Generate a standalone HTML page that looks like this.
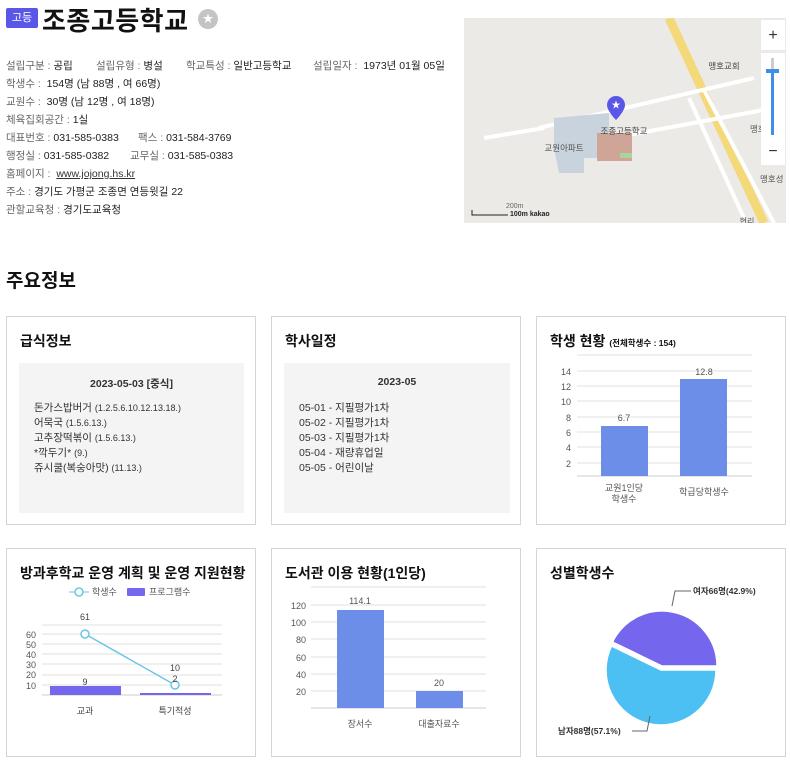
<!DOCTYPE html>
<html><head><meta charset="utf-8"><style>
*{margin:0;padding:0;box-sizing:border-box}
body{width:790px;height:760px;background:#fff;font-family:"Liberation Sans","Noto Sans CJK KR",sans-serif;color:#222;position:relative;overflow:hidden}
.a{position:absolute;white-space:nowrap}
.info{font-size:10.5px;color:#222}
.info .l{color:#666}
.card{position:absolute;border:1px solid #d4d4d4;background:#fff}
.card h3{position:absolute;left:13px;top:14px;font-size:14px;font-weight:bold;color:#111}
.gbox{position:absolute;background:#f4f4f4}
svg text{font-family:"Liberation Sans","Noto Sans CJK KR",sans-serif}
</style></head><body>
<div class="a" style="left:6px;top:8px;width:32px;height:20px;background:#5a57e8;border-radius:2px;color:#fff;font-size:11px;text-align:center;line-height:20px">고등</div>
<div class="a" style="left:42px;top:1px;font-size:26px;font-weight:bold;color:#111;letter-spacing:0.5px">조종고등학교</div>
<div class="a" style="left:198px;top:9px;width:20px;height:20px;border-radius:50%;background:#c4c4c4;color:#fff;font-size:11px;text-align:center;line-height:20px">★</div>

<div class="a info" style="left:6px;top:58px"><span class="l">설립구분 : </span>공립</div>
<div class="a info" style="left:96px;top:58px"><span class="l">설립유형 : </span>병설</div>
<div class="a info" style="left:186px;top:58px"><span class="l">학교특성 : </span>일반고등학교</div>
<div class="a info" style="left:313px;top:58px"><span class="l">설립일자 : </span>&nbsp;1973년 01월 05일</div>
<div class="a info" style="left:6px;top:76px"><span class="l">학생수 : </span>&nbsp;154명 (남 88명 , 여 66명)</div>
<div class="a info" style="left:6px;top:94px"><span class="l">교원수 : </span>&nbsp;30명 (남 12명 , 여 18명)</div>
<div class="a info" style="left:6px;top:112px"><span class="l">체육집회공간 : </span>1실</div>
<div class="a info" style="left:6px;top:130px"><span class="l">대표번호 : </span>031-585-0383</div>
<div class="a info" style="left:138px;top:130px"><span class="l">팩스 : </span>031-584-3769</div>
<div class="a info" style="left:6px;top:148px"><span class="l">행정실 : </span>031-585-0382</div>
<div class="a info" style="left:130px;top:148px"><span class="l">교무실 : </span>031-585-0383</div>
<div class="a info" style="left:6px;top:166px"><span class="l">홈페이지 : </span>&nbsp;<span style="text-decoration:underline;color:#333">www.jojong.hs.kr</span></div>
<div class="a info" style="left:6px;top:184px"><span class="l">주소 : </span>경기도 가평군 조종면 연등윗길 22</div>
<div class="a info" style="left:6px;top:202px"><span class="l">관할교육청 : </span>경기도교육청</div>

<svg class="a" style="left:464px;top:18px" width="322" height="205" viewBox="0 0 322 205">
<rect width="322" height="205" fill="#eceae6"/>
<path d="M205 0 L300 205" stroke="#f3d97a" stroke-width="9"/>
<path d="M75 110 L290 60 M95 130 L310 90 M240 72 L310 205 M225 80 L280 200 M20 120 L80 110" stroke="#fff" stroke-width="4" fill="none"/>
<path d="M90 100 L145 95 L145 140 L120 140 L120 155 L95 155 L90 130 Z" fill="#c9d3de"/>
<rect x="133" y="115" width="35" height="28" fill="#cfa597"/>
<rect x="156" y="135" width="12" height="5" fill="#a8d59a"/>
<path d="M152 78 a9 9 0 0 1 9 9 c0 6 -9 15 -9 15 c0 0 -9 -9 -9 -15 a9 9 0 0 1 9 -9z" fill="#5a57e8"/>
<text x="152" y="90" font-size="9" fill="#fff" text-anchor="middle">★</text>
<text x="160" y="116" font-size="8.5" fill="#444" text-anchor="middle">조종고등학교</text>
<text x="100" y="133" font-size="8.5" fill="#555" text-anchor="middle">교원아파트</text>
<text x="260" y="51" font-size="8.5" fill="#444" text-anchor="middle">맹호교회</text>
<text x="286" y="114" font-size="8.5" fill="#555">맹호아</text>
<text x="296" y="164" font-size="8.5" fill="#555">맹호성</text>
<text x="283" y="206" font-size="8" fill="#555" text-anchor="middle">현리</text>
<text x="42" y="190" font-size="7" fill="#666">200m</text>
<path d="M8 192 v5 h36" stroke="#222" fill="none"/>
<text x="46" y="198" font-size="7" font-weight="bold" fill="#222">100m  kakao</text>
<rect x="297" y="2" width="24" height="30" fill="#fff"/>
<text x="309" y="22" font-size="16" text-anchor="middle" fill="#333">+</text>
<rect x="297" y="35" width="24" height="90" fill="#fff"/>
<rect x="307" y="40" width="3" height="80" fill="#ccc"/>
<rect x="307" y="55" width="3" height="65" fill="#3f8fe8"/>
<rect x="302" y="51" width="13" height="4" fill="#3f8fe8"/>
<rect x="297" y="117" width="24" height="30" fill="#fff"/>
<text x="309" y="138" font-size="16" text-anchor="middle" fill="#333">−</text>
</svg>

<div class="a" style="left:6px;top:266px;font-size:19px;font-weight:bold;color:#111">주요정보</div>

<div class="card" style="left:6px;top:316px;width:250px;height:209px"><h3>급식정보</h3>
<div class="gbox" style="left:12px;top:46px;width:225px;height:150px">
<div class="a" style="left:0;width:225px;top:13px;text-align:center;font-size:10.5px;font-weight:bold;color:#333">2023-05-03 [중식]</div>
<div class="a" style="left:15px;top:38px;font-size:10.5px;line-height:15px;color:#333">돈가스밥버거 <span style="font-size:9px">(1.2.5.6.10.12.13.18.)</span><br>어묵국 <span style="font-size:9px">(1.5.6.13.)</span><br>고추장떡볶이 <span style="font-size:9px">(1.5.6.13.)</span><br>*깍두기* <span style="font-size:9px">(9.)</span><br>쥬시쿨(복숭아맛) <span style="font-size:9px">(11.13.)</span></div>
</div></div>

<div class="card" style="left:271px;top:316px;width:250px;height:209px"><h3>학사일정</h3>
<div class="gbox" style="left:12px;top:46px;width:226px;height:150px">
<div class="a" style="left:0;width:226px;top:13px;text-align:center;font-size:10.5px;font-weight:bold;color:#333">2023-05</div>
<div class="a" style="left:15px;top:38px;font-size:10.5px;line-height:15px;color:#333">05-01 - 지필평가1차<br>05-02 - 지필평가1차<br>05-03 - 지필평가1차<br>05-04 - 재량휴업일<br>05-05 - 어린이날</div>
</div></div>

<div class="card" style="left:536px;top:316px;width:250px;height:209px"><h3>학생 현황 <span style="font-size:8.5px">(전체학생수 : 154)</span></h3></div>
<svg class="a" style="left:536px;top:316px" width="250" height="209">
<g stroke="#e2e2e2"><line x1="41" y1="39" x2="216" y2="39"/><line x1="41" y1="55" x2="216" y2="55"/><line x1="41" y1="70" x2="216" y2="70"/><line x1="41" y1="85" x2="216" y2="85"/><line x1="41" y1="101" x2="216" y2="101"/><line x1="41" y1="116" x2="216" y2="116"/><line x1="41" y1="131" x2="216" y2="131"/><line x1="41" y1="147" x2="216" y2="147"/><line x1="41" y1="160" x2="216" y2="160" stroke="#ccc"/></g>
<g font-size="9" fill="#555" text-anchor="end"><text x="35" y="59">14</text><text x="35" y="74">12</text><text x="35" y="89">10</text><text x="35" y="105">8</text><text x="35" y="120">6</text><text x="35" y="135">4</text><text x="35" y="151">2</text></g>
<rect x="65" y="110" width="47" height="50" fill="#6d8ee8"/><rect x="144" y="63" width="47" height="97" fill="#6d8ee8"/>
<g font-size="9" fill="#555" text-anchor="middle"><text x="88" y="105">6.7</text><text x="168" y="59">12.8</text><text x="88" y="175">교원1인당</text><text x="88" y="186">학생수</text><text x="168" y="179">학급당학생수</text></g>
</svg>

<div class="card" style="left:6px;top:548px;width:250px;height:209px"><h3>방과후학교 운영 계획 및 운영 지원현황</h3></div>
<svg class="a" style="left:6px;top:548px" width="250" height="209">
<line x1="63" y1="44" x2="83" y2="44" stroke="#6cc6e6"/><circle cx="73" cy="44" r="4" fill="#fff" stroke="#6cc6e6" stroke-width="1.5"/>
<text x="86" y="47" font-size="9" fill="#555">학생수</text>
<rect x="121" y="40" width="18" height="8" rx="1" fill="#7566ee"/><text x="143" y="47" font-size="9" fill="#555">프로그램수</text>
<g stroke="#e2e2e2"><line x1="36" y1="77" x2="216" y2="77"/><line x1="36" y1="86" x2="216" y2="86"/><line x1="36" y1="96" x2="216" y2="96"/><line x1="36" y1="106" x2="216" y2="106"/><line x1="36" y1="116" x2="216" y2="116"/><line x1="36" y1="127" x2="216" y2="127"/><line x1="36" y1="137" x2="216" y2="137"/><line x1="36" y1="147" x2="216" y2="147" stroke="#ccc"/></g>
<g font-size="9" fill="#555" text-anchor="end"><text x="30" y="90">60</text><text x="30" y="100">50</text><text x="30" y="110">40</text><text x="30" y="120">30</text><text x="30" y="130">20</text><text x="30" y="141">10</text></g>
<rect x="44" y="138" width="71" height="9" fill="#7566ee"/><rect x="134" y="145" width="71" height="2" fill="#7566ee"/>
<line x1="79" y1="86" x2="169" y2="137" stroke="#6cc6e6" stroke-width="1.5"/>
<circle cx="79" cy="86" r="4" fill="#fff" stroke="#6cc6e6" stroke-width="1.5"/><circle cx="169" cy="137" r="4" fill="#fff" stroke="#6cc6e6" stroke-width="1.5"/>
<g font-size="9" fill="#444" text-anchor="middle"><text x="79" y="72">61</text><text x="79" y="137">9</text><text x="169" y="123">10</text><text x="169" y="134">2</text><text x="79" y="166">교과</text><text x="169" y="166">특기적성</text></g>
</svg>

<div class="card" style="left:271px;top:548px;width:250px;height:209px"><h3>도서관 이용 현황(1인당)</h3></div>
<svg class="a" style="left:271px;top:548px" width="250" height="209">
<g stroke="#e2e2e2"><line x1="40" y1="39" x2="215" y2="39"/><line x1="40" y1="57" x2="215" y2="57"/><line x1="40" y1="74" x2="215" y2="74"/><line x1="40" y1="91" x2="215" y2="91"/><line x1="40" y1="109" x2="215" y2="109"/><line x1="40" y1="126" x2="215" y2="126"/><line x1="40" y1="143" x2="215" y2="143"/><line x1="40" y1="160" x2="215" y2="160" stroke="#ccc"/></g>
<g font-size="9" fill="#555" text-anchor="end"><text x="35" y="61">120</text><text x="35" y="78">100</text><text x="35" y="95">80</text><text x="35" y="113">60</text><text x="35" y="130">40</text><text x="35" y="147">20</text></g>
<rect x="66" y="62" width="47" height="98" fill="#6d8ee8"/><rect x="145" y="143" width="47" height="17" fill="#6d8ee8"/>
<g font-size="9" fill="#555" text-anchor="middle"><text x="89" y="56">114.1</text><text x="168" y="138">20</text><text x="89" y="179">장서수</text><text x="168" y="179">대출자료수</text></g>
</svg>

<div class="card" style="left:536px;top:548px;width:250px;height:209px"><h3>성별학생수</h3></div>
<svg class="a" style="left:536px;top:548px" width="250" height="209">
<path d="M125 122 L180 122 A55 55 0 1 1 75.5 98 Z" fill="#4cc0f2" stroke="#fff" stroke-width="1.5"/>
<path d="M126 118 L181 118 A55 55 0 0 0 76.5 94 Z" fill="#7566ee" stroke="#fff" stroke-width="1.5"/>
<path d="M136 58 L139 43 L155 43" stroke="#666" fill="none"/>
<text x="157" y="46" font-size="8.5" font-weight="bold" fill="#333">여자66명(42.9%)</text>
<path d="M114 168 L111 183 L96 183" stroke="#666" fill="none"/>
<text x="22" y="186" font-size="8.5" font-weight="bold" fill="#333">남자88명(57.1%)</text>
</svg>
</body></html>
